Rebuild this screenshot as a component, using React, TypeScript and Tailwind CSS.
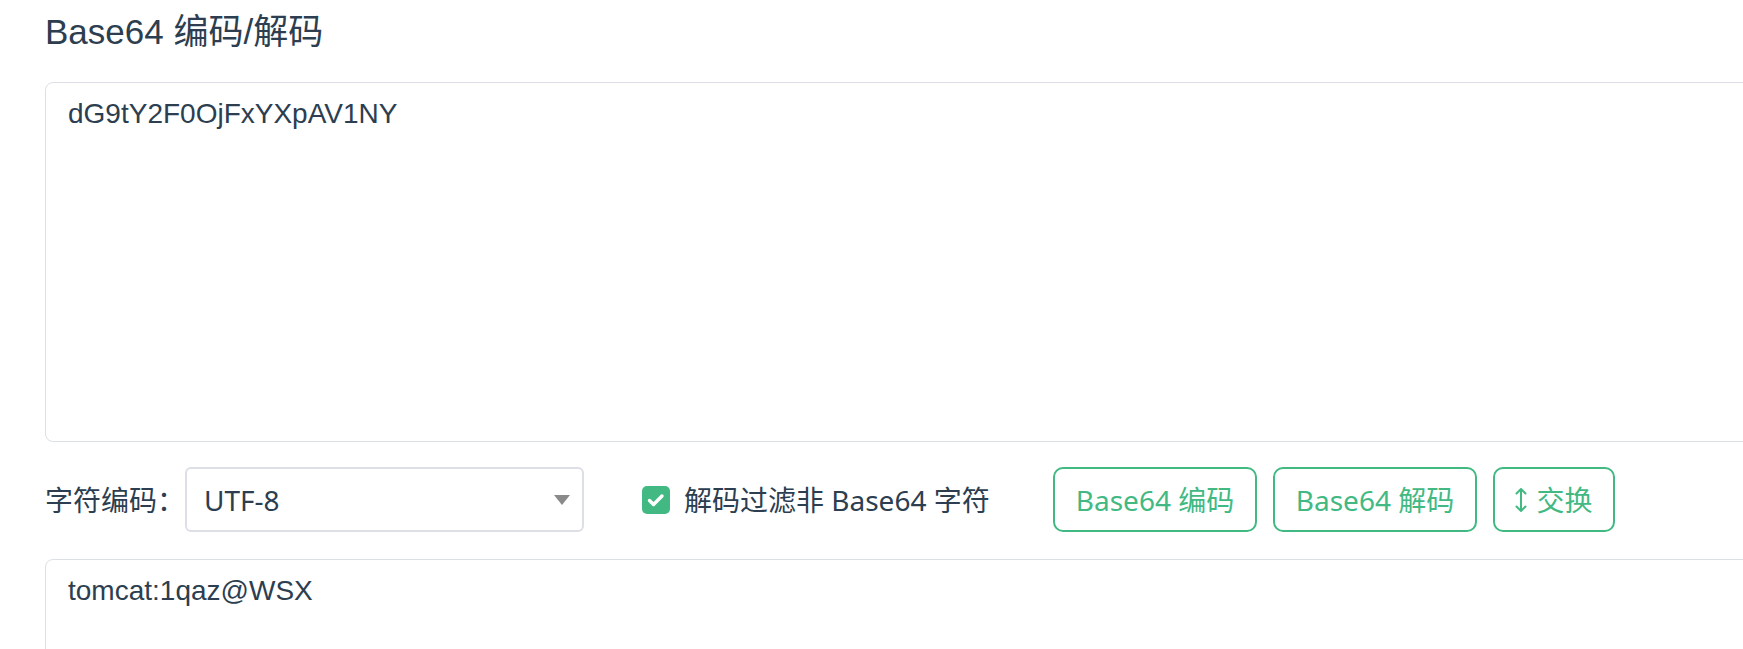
import { useState } from 'react';

// Encode a UTF-8 string to Base64
function encodeBase64(text: string): string {
  const bytes = new TextEncoder().encode(text);
  let binary = '';
  bytes.forEach(b => (binary += String.fromCharCode(b)));
  return btoa(binary);
}

// Decode Base64 to a UTF-8 string, optionally dropping invalid chars
function decodeBase64(text: string, filter: boolean): string {
  const clean = filter ? text.replace(/[^A-Za-z0-9+/=]/g, '') : text;
  try {
    const binary = atob(clean);
    const bytes = Uint8Array.from(binary, c => c.charCodeAt(0));
    return new TextDecoder().decode(bytes);
  } catch {
    return '';
  }
}

const textFont = { fontFamily: '"Liberation Sans", "Noto Sans CJK SC", sans-serif' };
const uiFont = { fontFamily: '"Noto Sans", "Noto Sans CJK SC", sans-serif' };

export default function App() {
  const [input, setInput] = useState('dG9tY2F0OjFxYXpAV1NY');
  const [output, setOutput] = useState('tomcat:1qaz@WSX');
  const [filter, setFilter] = useState(true);

  return (
    <div className="h-screen overflow-hidden bg-white pl-[45px] text-[#2c3e50]">
      {/* Header */}
      <h1 className="pt-[11px] text-[35px] leading-[42px] font-normal" style={textFont}>
        Base64 编码/解码
      </h1>

      {/* Input */}
      <textarea
        value={input}
        onChange={e => setInput(e.target.value)}
        className="mt-[29px] block h-[360px] w-[1760px] resize-none rounded-[8px] border border-[#dcdfe6] px-[22px] py-[10px] text-[28px] leading-[42px] text-[#2c3e50] outline-none"
        style={textFont}
      />

      {/* Toolbar */}
      <div className="mt-[25px] flex h-[65px] items-center text-[28px] leading-[40px]" style={uiFont}>
        <span className="w-[140px] shrink-0">字符编码：</span>
        <div className="flex h-[65px] w-[399px] shrink-0 items-center justify-between rounded-[6px] border-2 border-[#dcdfe6] pl-[17px] pr-[12px]">
          <span>UTF-8</span>
          <svg width="16" height="10" viewBox="0 0 16 10">
            <polygon points="0,0 16,0 8,10" fill="#8a8a8a" />
          </svg>
        </div>

        <label className="ml-[58px] flex w-[411px] shrink-0 cursor-pointer items-center gap-[14px]">
          <span
            onClick={() => setFilter(!filter)}
            className={`flex h-[28px] w-[28px] items-center justify-center rounded-[5px] ${filter ? 'bg-[#42b983]' : 'border-2 border-[#dcdfe6] bg-white'}`}
          >
            {filter && (
              <svg width="28" height="28" viewBox="0 0 28 28">
                <path d="M7.5 14.5l4 4 8.5-8.5" fill="none" stroke="white" strokeWidth={3.4} strokeLinecap="round" strokeLinejoin="round" />
              </svg>
            )}
          </span>
          <span>解码过滤非 Base64 字符</span>
        </label>

        <div className="flex gap-[16px]">
          <button
            onClick={() => setOutput(encodeBase64(input))}
            className="flex h-[65px] w-[204px] items-center justify-center rounded-[10px] border-2 border-[#42b983] text-[#42b983]"
          >
            Base64 编码
          </button>
          <button
            onClick={() => setOutput(decodeBase64(input, filter))}
            className="flex h-[65px] w-[204px] items-center justify-center rounded-[10px] border-2 border-[#42b983] text-[#42b983]"
          >
            Base64 解码
          </button>
          <button
            onClick={() => {
              setInput(output);
              setOutput(input);
            }}
            className="flex h-[65px] w-[122px] items-center justify-center gap-[9px] rounded-[10px] border-2 border-[#42b983] text-[#42b983]"
          >
            <svg width="12" height="26" viewBox="0 0 12 26">
              <path d="M6 2v22M1.5 6.5L6 2l4.5 4.5M1.5 19.5L6 24l4.5-4.5" fill="none" stroke="#42b983" strokeWidth={2} strokeLinecap="round" strokeLinejoin="round" />
            </svg>
            交换
          </button>
        </div>
      </div>

      {/* Output */}
      <textarea
        value={output}
        onChange={e => setOutput(e.target.value)}
        className="mt-[27px] block h-[360px] w-[1760px] resize-none rounded-[8px] border border-[#dcdfe6] px-[22px] py-[10px] text-[28px] leading-[42px] text-[#2c3e50] outline-none"
        style={textFont}
      />
    </div>
  );
}
